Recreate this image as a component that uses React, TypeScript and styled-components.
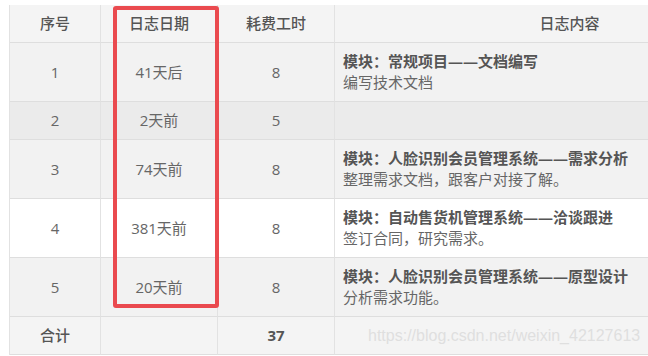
import styled, { createGlobalStyle } from "styled-components";

const GlobalStyle = createGlobalStyle`
  html, body {
    margin: 0;
    padding: 0;
    background: #fff;
    overflow: hidden;
  }
  body {
    font-family: "Open Sans", "Noto Sans CJK SC", sans-serif;
  }
`;

const Page = styled.div`
  position: relative;
  width: 648px;
  height: 356px;
  padding: 5px 0 0 9px;
  box-sizing: border-box;
  overflow: hidden;
`;

const Table = styled.div`
  position: relative;
  display: grid;
  grid-template-columns: 91px 117px 117px 470px;
  width: 796px;
  border-left: 1px solid #e2e2e2;
  font-size: 15px;
  line-height: 21px;
  color: #666;
`;

const Row = styled.div<{ $bg: string }>`
  display: contents;
  & > div {
    background: ${(p) => p.$bg};
  }
`;

const Cell = styled.div<{ $left?: boolean; $weight?: number }>`
  padding: 8px;
  border-right: 1px solid #e2e2e2;
  border-bottom: 1px solid #dedede;
  display: flex;
  flex-direction: column;
  justify-content: center;
  align-items: ${(p) => (p.$left ? "flex-start" : "center")};
  font-weight: ${(p) => p.$weight ?? 400};
  color: ${(p) => (p.$weight ? "#555" : "#666")};
  white-space: nowrap;
`;

const Title = styled.span`
  font-weight: 700;
  color: #555;
`;

const Desc = styled.span`
  color: #666;
`;

const Highlight = styled.div`
  position: absolute;
  left: 103px;
  top: 1px;
  width: 106px;
  height: 302px;
  box-sizing: border-box;
  border: 4px solid #ea4a4f;
  border-radius: 3px;
  pointer-events: none;
`;

const Watermark = styled.div`
  position: absolute;
  left: 368px;
  top: 326px;
  font-family: "Liberation Sans", Arial, sans-serif;
  font-size: 16px;
  line-height: 20px;
  color: #dfdfdf;
  white-space: nowrap;
`;

type LogRow = {
  id: number;
  date: string;
  hours: number;
  title?: string;
  desc?: string;
  bg: string;
};

const rows: LogRow[] = [
  { id: 1, date: "41天后", hours: 8, title: "模块：常规项目——文档编写", desc: "编写技术文档", bg: "#f2f2f2" },
  { id: 2, date: "2天前", hours: 5, bg: "#ebebeb" },
  { id: 3, date: "74天前", hours: 8, title: "模块：人脸识别会员管理系统——需求分析", desc: "整理需求文档，跟客户对接了解。", bg: "#f2f2f2" },
  { id: 4, date: "381天前", hours: 8, title: "模块：自动售货机管理系统——洽谈跟进", desc: "签订合同，研究需求。", bg: "#ffffff" },
  { id: 5, date: "20天前", hours: 8, title: "模块：人脸识别会员管理系统——原型设计", desc: "分析需求功能。", bg: "#f2f2f2" },
];

export default function App() {
  const total = rows.reduce((s, r) => s + r.hours, 0);
  return (
    <>
      <GlobalStyle />
      <Page>
        <Table>
          <Row $bg="#f4f4f4">
            <Cell $weight={500}>序号</Cell>
            <Cell $weight={500}>日志日期</Cell>
            <Cell $weight={500}>耗费工时</Cell>
            <Cell $weight={500}>日志内容</Cell>
          </Row>
          {rows.map((r) => (
            <Row key={r.id} $bg={r.bg}>
              <Cell>{r.id}</Cell>
              <Cell>{r.date}</Cell>
              <Cell>{r.hours}</Cell>
              <Cell $left>
                {r.title ? <Title>{r.title}</Title> : <span>&nbsp;</span>}
                {r.desc && <Desc>{r.desc}</Desc>}
              </Cell>
            </Row>
          ))}
          <Row $bg="#f4f4f4">
            <Cell $weight={500}>合计</Cell>
            <Cell />
            <Cell $weight={700}>{total}</Cell>
            <Cell>&nbsp;</Cell>
          </Row>
          <Highlight />
        </Table>
        <Watermark>https://blog.csdn.net/weixin_42127613</Watermark>
      </Page>
    </>
  );
}
